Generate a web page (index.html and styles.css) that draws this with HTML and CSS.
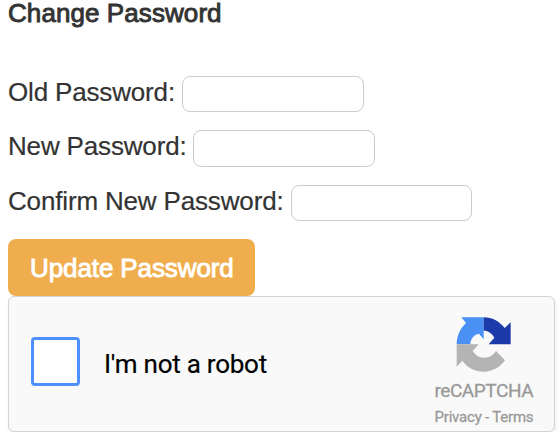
FILE: index.html
```html
<!DOCTYPE html>
<html lang="en">
<head>
<meta charset="utf-8">
<title>Change Password</title>
<link rel="stylesheet" href="styles.css">
</head>
<body>
<form>
  <h1 class="title"><span>Change Password</span></h1>
  <div class="row"><label class="old" for="old">Old Password:</label><input id="old" type="password"></div>
  <div class="row"><label class="new" for="new">New Password:</label><input id="new" type="password"></div>
  <div class="row"><label class="confirm" for="confirm">Confirm New Password:</label><input id="confirm" type="password"></div>
  <button class="submit" type="button"><span>Update Password</span></button>
  <section class="captcha">
    <div class="check"></div>
    <div class="prompt"><span>I'm not a robot</span></div>
    <div class="brand">
      <svg class="logo" viewBox="42 30 180 180" aria-hidden="true">
        <path fill="#4a90f5" d="M50 118C50 93 60 71 78 54L64 37H131V103L117 86C101 89 91 102 91 118Z"/>
        <path fill="#1c3aa9" d="M131 37C156 37 178 49 194 69L212 52V118H146L163 98C156 85 145 77 131 77Z"/>
        <path fill="#b4b4b4" d="M50 118H116L98 138C106 151 117 158 131 158C147 158 160 151 168 138L195 166C180 187 158 200 131 200C105 200 82 188 67 167L50 185Z"/>
      </svg>
      <div class="name"><span>reCAPTCHA</span></div>
      <div class="links"><span>Privacy - Terms</span></div>
    </div>
  </section>
</form>
</body>
</html>
```
FILE: styles.css
```css
* { box-sizing: border-box; }
body {
  margin: 0;
  padding: 0 5px 0 8px;
  background: #fff;
  color: #333;
  font: 26px/36px "Liberation Sans", Arial, sans-serif;
  overflow: hidden;
}
form { display: flex; flex-direction: column; align-items: flex-start; }
.title { margin: 0 0 50px; font-size: 26px; font-weight: 400; line-height: 26px; letter-spacing: 0.08px; white-space: nowrap; -webkit-text-stroke: 0.9px #333; }
.row { display: flex; height: 36.2px; margin-bottom: 18.2px; gap: 8px; white-space: nowrap; }
.row label { line-height: 33px; letter-spacing: -0.16px; -webkit-text-stroke: 0.2px #333; }
.old { width: 166px; }
.new { width: 177px; }
.confirm { width: 275px; }
.row input { width: 182px; height: 36.2px; margin: 0; padding: 0 8px; border: 1px solid #ccc; border-radius: 8px; background: #fff; }
.row .confirm + input { width: 181px; }
.submit {
  width: 247px;
  height: 57px;
  margin-top: -0.2px;
  padding: 1px 0 0 22px;
  border: 0;
  border-radius: 8px;
  background: #f0ad4e;
  color: #fff;
  text-align: left;
  white-space: nowrap;
  letter-spacing: -0.1px;
  font: 26px/56px "Liberation Sans", Arial, sans-serif;
  -webkit-text-stroke: 0.9px #fff;
}
.captcha {
  display: flex;
  width: 547px;
  height: 136px;
  border: 1px solid #d3d3d3;
  border-radius: 6px;
  background: #f9f9f9;
  box-shadow: 1px 4px 6px -1px rgba(0, 0, 0, .08);
  font-family: Roboto, sans-serif;
  white-space: nowrap;
}
.check { width: 49px; height: 49px; margin: 40px 24px 0 22px; border: 3px solid #4d90fe; border-radius: 4px; background: #fff; }
.prompt { width: 330px; padding-top: 49px; color: #000; font-size: 26px; letter-spacing: -0.25px; -webkit-text-stroke: 0.2px #000; }
.brand { display: flex; flex-direction: column; color: #999; }
.logo { width: 60px; height: 60px; margin: 18px 0 0 20px; }
.name { font-size: 19px; line-height: 24px; margin-top: 4px; letter-spacing: -0.45px; }
.links { font-size: 15px; line-height: 20px; margin-top: 4px; letter-spacing: -0.2px; }
.name, .links { padding-left: 0.5px; -webkit-text-stroke: 0.3px #999; }
```
